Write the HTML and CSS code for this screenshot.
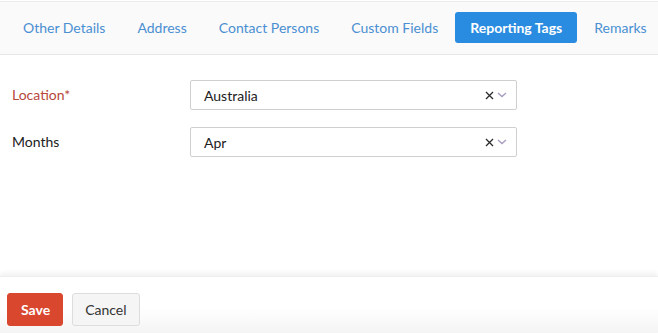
FILE: index.html
```html
<!DOCTYPE html>
<html>
<head>
  <link rel="stylesheet" href="styles.css">
</head>
<body>
  <div class="tab-bar">
    <a class="tab">Other Details</a>
    <a class="tab">Address</a>
    <a class="tab">Contact Persons</a>
    <a class="tab">Custom Fields</a>
    <a class="tab active">Reporting Tags</a>
    <a class="tab">Remarks</a>
  </div>

  <div class="form">
    <div class="form-row">
      <label class="form-label required">Location*</label>
      <div class="select">
        <span class="select-value">Australia</span>
        <svg class="select-clear" width="9" height="9" viewBox="0 0 9 9"><path d="M1 1l7 7M8 1L1 8" stroke="#2b2b2b" stroke-width="1.3"/></svg>
        <svg class="select-caret" width="10" height="6" viewBox="0 0 10 6"><path d="M1 1l4 3.5L9 1" fill="none" stroke="#a99cc0" stroke-width="1.4"/></svg>
      </div>
    </div>
    <div class="form-row">
      <label class="form-label">Months</label>
      <div class="select">
        <span class="select-value">Apr</span>
        <svg class="select-clear" width="9" height="9" viewBox="0 0 9 9"><path d="M1 1l7 7M8 1L1 8" stroke="#2b2b2b" stroke-width="1.3"/></svg>
        <svg class="select-caret" width="10" height="6" viewBox="0 0 10 6"><path d="M1 1l4 3.5L9 1" fill="none" stroke="#a99cc0" stroke-width="1.4"/></svg>
      </div>
    </div>
  </div>

  <div class="footer">
    <button class="btn btn-primary">Save</button>
    <button class="btn">Cancel</button>
  </div>
</body>
</html>
```

FILE: styles.css
```css
* {
  margin: 0;
  padding: 0;
  box-sizing: border-box;
}

body {
  width: 658px;
  height: 333px;
  overflow: hidden;
  background: #fff;
  font-family: Lato, 'Open Sans', sans-serif;
  font-size: 14px;
  color: #212121;
  display: flex;
  flex-direction: column;
  padding-top: 1px;
}

.tab-bar {
  display: flex;
  align-items: center;
  height: 54px;
  padding: 0 0 1px 7px;
  background: #fafafa;
  border-top: 1px solid #ececec;
  border-bottom: 1px solid #e6e6e6;
}

.tab {
  padding: 0 16px;
  color: #4a8fd2;
  line-height: 31px;
  white-space: nowrap;
}

.tab.active {
  margin: 0 1px;
  padding: 0 15px;
  background: #2a8ce0;
  color: #fff;
  font-weight: 700;
  border-radius: 3px;
}

.form {
  flex: 1;
  display: flex;
  flex-direction: column;
  gap: 17px;
  padding: 25px 0 0 12px;
}

.form-row {
  display: flex;
  align-items: center;
}

.form-label {
  width: 178px;
  padding-bottom: 1px;
}

.form-label.required {
  color: #b8473b;
}

.select {
  width: 327px;
  height: 30px;
  display: flex;
  align-items: center;
  padding: 0 9px 0 13px;
  border: 1px solid #cfcfcf;
  border-radius: 2px;
}

.select-value {
  flex: 1;
}

.select-clear {
  margin-right: 3px;
}

.footer {
  height: 57px;
  display: flex;
  align-items: flex-start;
  gap: 9px;
  padding: 16px 0 0 7px;
  background: linear-gradient(#fff 55%, #f4f4f4);
  box-shadow: 0 -3px 5px rgba(0, 0, 0, 0.06);
  border-top: 1px solid #efefef;
}

.btn {
  height: 33px;
  padding: 0 12px;
  font-family: inherit;
  font-size: 14px;
  color: #333;
  background: #f5f5f5;
  border: 1px solid #ddd;
  border-radius: 3px;
}

.btn-primary {
  padding: 0 12px 0 13px;
  background: #d9472f;
  border-color: #d9472f;
  color: #fff;
  font-weight: 700;
}
```
